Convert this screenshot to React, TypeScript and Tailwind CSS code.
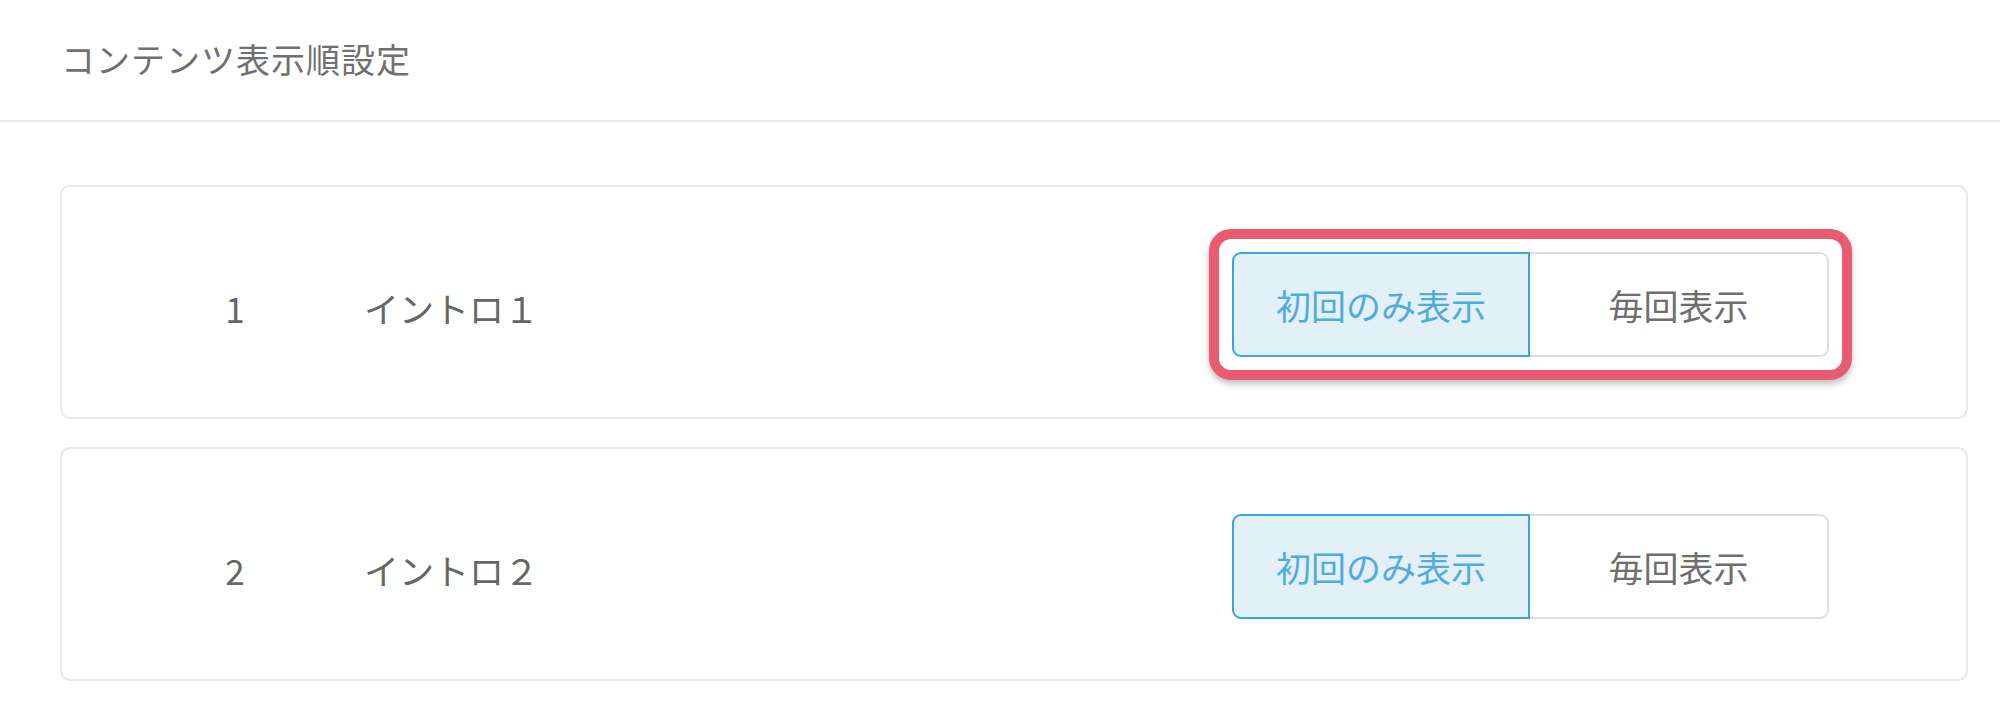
import React from "react";

interface Item {
  no: number;
  title: string;
  highlighted: boolean;
}

const items: Item[] = [
  { no: 1, title: "イントロ１", highlighted: true },
  { no: 2, title: "イントロ２", highlighted: false },
];

const font = { fontFamily: '"Noto Sans CJK JP", "Noto Sans", sans-serif' };

function Toggle() {
  return (
    <div className="flex h-[105px] w-[597px] text-[35px] leading-none">
      <button className="flex w-[298px] items-center justify-center rounded-l-[9px] border-2 border-[#3aa5dd] bg-[#e2f0f7] text-[#52abdd]">
        初回のみ表示
      </button>
      <button className="flex flex-1 items-center justify-center rounded-r-[9px] border-2 border-l-0 border-[#dcdee5] bg-white text-[#6e6e6e]">
        毎回表示
      </button>
    </div>
  );
}

export default function App() {
  return (
    <div className="min-h-[702px] w-[2000px] bg-white" style={font}>
      {/* Header */}
      <div className="flex h-[122px] items-center border-b-2 border-[#ececec] pb-[4px] pl-[61px]">
        <h1 className="text-[34px] font-normal tracking-[1px] text-[#707070]">コンテンツ表示順設定</h1>
      </div>

      {/* List */}
      <div className="flex flex-col gap-[28px] pl-[60px] pr-[32px] pt-[63px]">
        {items.map((item) => (
          <div
            key={item.no}
            className="flex h-[234px] items-center rounded-[10px] border-2 border-[#e8e8e8] bg-white"
          >
            <div className="mt-[10px] flex items-center text-[35px] leading-none text-[#666]">
              <span className="box-content w-[70px] pl-[138px] text-center">{item.no}</span>
              <span className="ml-[94px]">{item.title}</span>
            </div>
            <div className="ml-auto mr-[137px] mt-[4px]">
              {item.highlighted ? (
                <div className="-m-[23px] rounded-[22px] border-[10px] border-[#ea5b6f] bg-white p-[13px] shadow-[0_4px_6px_rgba(0,0,0,0.25)]">
                  <Toggle />
                </div>
              ) : (
                <Toggle />
              )}
            </div>
          </div>
        ))}
      </div>
    </div>
  );
}
